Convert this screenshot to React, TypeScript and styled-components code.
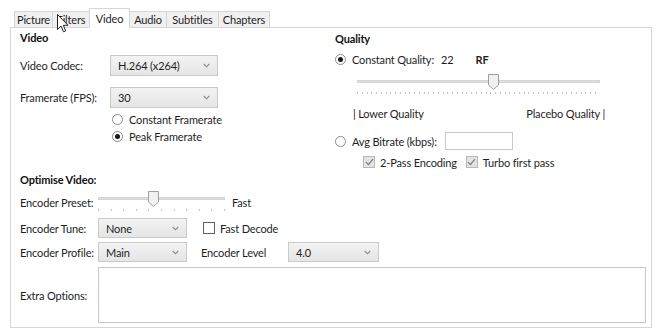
import React from 'react';
import styled, { createGlobalStyle } from 'styled-components';

const GlobalStyle = createGlobalStyle`
  html, body {
    margin: 0;
    padding: 0;
    background: #ffffff;
  }
  body {
    font-family: 'Lato', 'Open Sans', sans-serif;
    font-size: 11px;
    letter-spacing: -0.15px;
    color: #1e1e1e;
  }
`;

const Frame = styled.div`
  position: relative;
  width: 662px;
  height: 335px;
  padding: 8px 10px 0 10px;
  box-sizing: border-box;
`;

const TabStrip = styled.div`
  display: flex;
  align-items: flex-end;
  height: 20px;
  padding-left: 5px;
  margin-bottom: -1px;
  position: relative;
  z-index: 1;
`;

const Tab = styled.div<{ $active?: boolean; $w: number }>`
  width: ${(p) => p.$w}px;
  height: ${(p) => (p.$active ? 20 : 17)}px;
  box-sizing: border-box;
  display: flex;
  align-items: center;
  justify-content: center;
  border: 1px solid #d6d6d6;
  border-bottom: ${(p) => (p.$active ? '1px solid #ffffff' : '1px solid #d6d6d6')};
  margin-left: -1px;
  background: ${(p) => (p.$active ? '#ffffff' : '#f0f0f0')};
  color: #1e1e1e;
  font-size: 11px;
  padding-top: ${(p) => (p.$active ? 1 : 0)}px;
`;

const Panel = styled.div`
  border: 1px solid #d6d6d6;
  height: 301px;
  box-sizing: border-box;
  padding-bottom: 4px;
  display: flex;
  flex-direction: column;
`;

const TopGrid = styled.div`
  display: grid;
  grid-template-columns: 324px 1fr;
  height: 141px;
`;

const LeftCol = styled.div`
  padding-left: 9px;
  display: flex;
  flex-direction: column;
`;

const RightCol = styled.div`
  display: flex;
  flex-direction: column;
`;

const Title = styled.div<{ $top: number }>`
  font-weight: 700;
  height: 16px;
  line-height: 16px;
  margin-top: ${(p) => p.$top}px;
  color: #111;
`;

const Row = styled.div<{ $top: number; $h?: number; $indent?: number }>`
  display: flex;
  align-items: center;
  margin-top: ${(p) => p.$top}px;
  height: ${(p) => p.$h ?? 20}px;
  margin-left: ${(p) => p.$indent ?? 0}px;
`;

const Label = styled.div<{ $w: number }>`
  width: ${(p) => p.$w}px;
  flex: none;
  white-space: nowrap;
`;

const Select = styled.div<{ $w: number; $h?: number }>`
  width: ${(p) => p.$w}px;
  height: ${(p) => p.$h ?? 20}px;
  box-sizing: border-box;
  border: 1px solid #cacaca;
  background: linear-gradient(#f3f3f3, #e5e5e5);
  display: flex;
  align-items: center;
  justify-content: space-between;
  padding: 0 7px 0 7px;
  flex: none;
`;

const Chevron = () => (
  <svg width="7" height="5" viewBox="0 0 7 5">
    <path d="M0.8 1 L3.5 3.8 L6.2 1" fill="none" stroke="#8a8a8a" strokeWidth="1.1" />
  </svg>
);

const RadioCircle = styled.span<{ $checked?: boolean }>`
  width: 11px;
  height: 11px;
  border-radius: 50%;
  border: 1px solid #8c8c8c;
  background: #fff;
  box-sizing: border-box;
  display: inline-flex;
  align-items: center;
  justify-content: center;
  margin-right: 6px;
  flex: none;
  &::after {
    content: '';
    width: 5px;
    height: 5px;
    border-radius: 50%;
    background: ${(p) => (p.$checked ? '#1a1a1a' : 'transparent')};
  }
`;

const CheckBox = styled.span<{ $checked?: boolean }>`
  width: 12px;
  height: 12px;
  box-sizing: border-box;
  border: 1px solid ${(p) => (p.$checked ? '#b8b8b8' : '#5e5e5e')};
  background: ${(p) => (p.$checked ? '#e3e3e3' : '#fff')};
  display: inline-flex;
  align-items: center;
  justify-content: center;
  margin-right: 5px;
  flex: none;
`;

const Tick = () => (
  <svg width="9" height="8" viewBox="0 0 9 8">
    <path d="M1 4.2 L3.4 6.6 L8 1.2" fill="none" stroke="#7a7a7a" strokeWidth="1.2" />
  </svg>
);

const SliderBox = styled.div<{ $w: number }>`
  position: relative;
  width: ${(p) => p.$w}px;
  height: 22px;
  flex: none;
`;

const Track = styled.div`
  position: absolute;
  left: 0;
  right: 0;
  top: 6px;
  height: 3px;
  background: #e2e2e2;
  border: 1px solid #d3d3d3;
  box-sizing: border-box;
`;

const Ticks = styled.div<{ $step: number }>`
  position: absolute;
  left: 0;
  right: 0;
  top: 18px;
  height: 2px;
  background: repeating-linear-gradient(
    to right,
    #c4c4c4 0,
    #c4c4c4 1px,
    transparent 1px,
    transparent ${(p) => p.$step}px
  );
`;

const Thumb = styled.svg`
  position: absolute;
  top: 0;
  margin-left: -5px;
`;

const Slider = ({ w, pos, step }: { w: number; pos: number; step: number }) => (
  <SliderBox $w={w}>
    <Track />
    <Ticks $step={step} />
    <Thumb width="11" height="16" viewBox="0 0 11 16" style={{ left: `${pos * 100}%` }}>
      <path d="M0.5 0.5 H10.5 V11 L5.5 15.5 L0.5 11 Z" fill="#f1f1f1" stroke="#9e9e9e" />
    </Thumb>
  </SliderBox>
);

const Input = styled.div<{ $w: number; $h: number }>`
  width: ${(p) => p.$w}px;
  height: ${(p) => p.$h}px;
  border: 1px solid #c8c8c8;
  background: #fff;
  box-sizing: border-box;
  flex: none;
`;

const Spacer = styled.span<{ $w: number }>`
  display: inline-block;
  width: ${(p) => p.$w}px;
  flex: none;
`;

const RangeLabels = styled.div`
  display: flex;
  justify-content: space-between;
  width: 252px;
  margin-left: 18px;
  margin-top: 10px;
  height: 16px;
  line-height: 16px;
`;

const Bold = styled.span`
  font-weight: 700;
`;

const Bottom = styled.div`
  padding-left: 9px;
  display: flex;
  flex-direction: column;
`;

const TextArea = styled.div`
  width: 548px;
  height: 56px;
  border: 1px solid #c8c8c8;
  box-sizing: border-box;
  background: #fff;
`;

const Cursor = styled.svg`
  position: absolute;
  left: 57px;
  top: 14px;
  z-index: 5;
`;

const tabs: [string, number][] = [
  ['Picture', 39],
  ['Filters', 38],
  ['Video', 41],
  ['Audio', 38],
  ['Subtitles', 53],
  ['Chapters', 52],
];

export default function App() {
  return (
    <>
      <GlobalStyle />
      <Frame>
        <TabStrip>
          {tabs.map(([t, w]) => (
            <Tab key={t} $w={w} $active={t === 'Video'}>
              {t}
            </Tab>
          ))}
        </TabStrip>
        <Panel>
          <TopGrid>
            <LeftCol>
              <Title $top={2}>Video</Title>
              <Row $top={9} $h={21}>
                <Label $w={90}>Video Codec:</Label>
                <Select $w={108} $h={21}>
                  H.264 (x264) <Chevron />
                </Select>
              </Row>
              <Row $top={11} $h={21}>
                <Label $w={90}>Framerate (FPS):</Label>
                <Select $w={108} $h={21}>
                  30 <Chevron />
                </Select>
              </Row>
              <Row $top={3} $h={17} $indent={92}>
                <RadioCircle />
                Constant Framerate
              </Row>
              <Row $top={0} $h={17} $indent={92}>
                <RadioCircle $checked />
                Peak Framerate
              </Row>
            </LeftCol>
            <RightCol>
              <Title $top={3}>Quality</Title>
              <Row $top={4} $h={16} $indent={0}>
                <RadioCircle $checked />
                Constant Quality:
                <Spacer $w={7} />
                22
                <Spacer $w={22} />
                <Bold>RF</Bold>
              </Row>
              <Row $top={7} $h={22} $indent={22}>
                <Slider w={243} pos={0.56} step={4.76} />
              </Row>
              <RangeLabels>
                <span>| Lower Quality</span>
                <span>Placebo Quality |</span>
              </RangeLabels>
              <Row $top={10} $h={18}>
                <RadioCircle />
                Avg Bitrate (kbps):
                <Spacer $w={8} />
                <Input $w={68} $h={18} />
              </Row>
              <Row $top={4} $h={16} $indent={28}>
                <CheckBox $checked>
                  <Tick />
                </CheckBox>
                2-Pass Encoding
                <Spacer $w={9} />
                <CheckBox $checked>
                  <Tick />
                </CheckBox>
                Turbo first pass
              </Row>
            </RightCol>
          </TopGrid>
          <Bottom>
            <Title $top={3}>Optimise Video:</Title>
            <Row $top={3} $h={22}>
              <Label $w={78}>Encoder Preset:</Label>
              <Slider w={127} pos={0.43} step={12.6} />
              <Spacer $w={7} />
              Fast
            </Row>
            <Row $top={5} $h={20}>
              <Label $w={78}>Encoder Tune:</Label>
              <Select $w={89}>
                None <Chevron />
              </Select>
              <Spacer $w={16} />
              <CheckBox />
              Fast Decode
            </Row>
            <Row $top={4} $h={20}>
              <Label $w={78}>Encoder Profile:</Label>
              <Select $w={89}>
                Main <Chevron />
              </Select>
              <Spacer $w={14} />
              <Label $w={87}>Encoder Level</Label>
              <Select $w={91}>
                4.0 <Chevron />
              </Select>
            </Row>
            <Row $top={5} $h={56}>
              <Label $w={78}>Extra Options:</Label>
              <TextArea />
            </Row>
          </Bottom>
        </Panel>
        <Cursor width="12" height="19" viewBox="0 0 12 19">
          <path
            d="M0.5 0.5 L0.5 15.5 L4 12 L6.5 17.8 L8.7 16.9 L6.3 11.3 L11 11.3 Z"
            fill="#ffffff"
            stroke="#222"
            strokeWidth="1"
            strokeLinejoin="round"
          />
        </Cursor>
      </Frame>
    </>
  );
}
